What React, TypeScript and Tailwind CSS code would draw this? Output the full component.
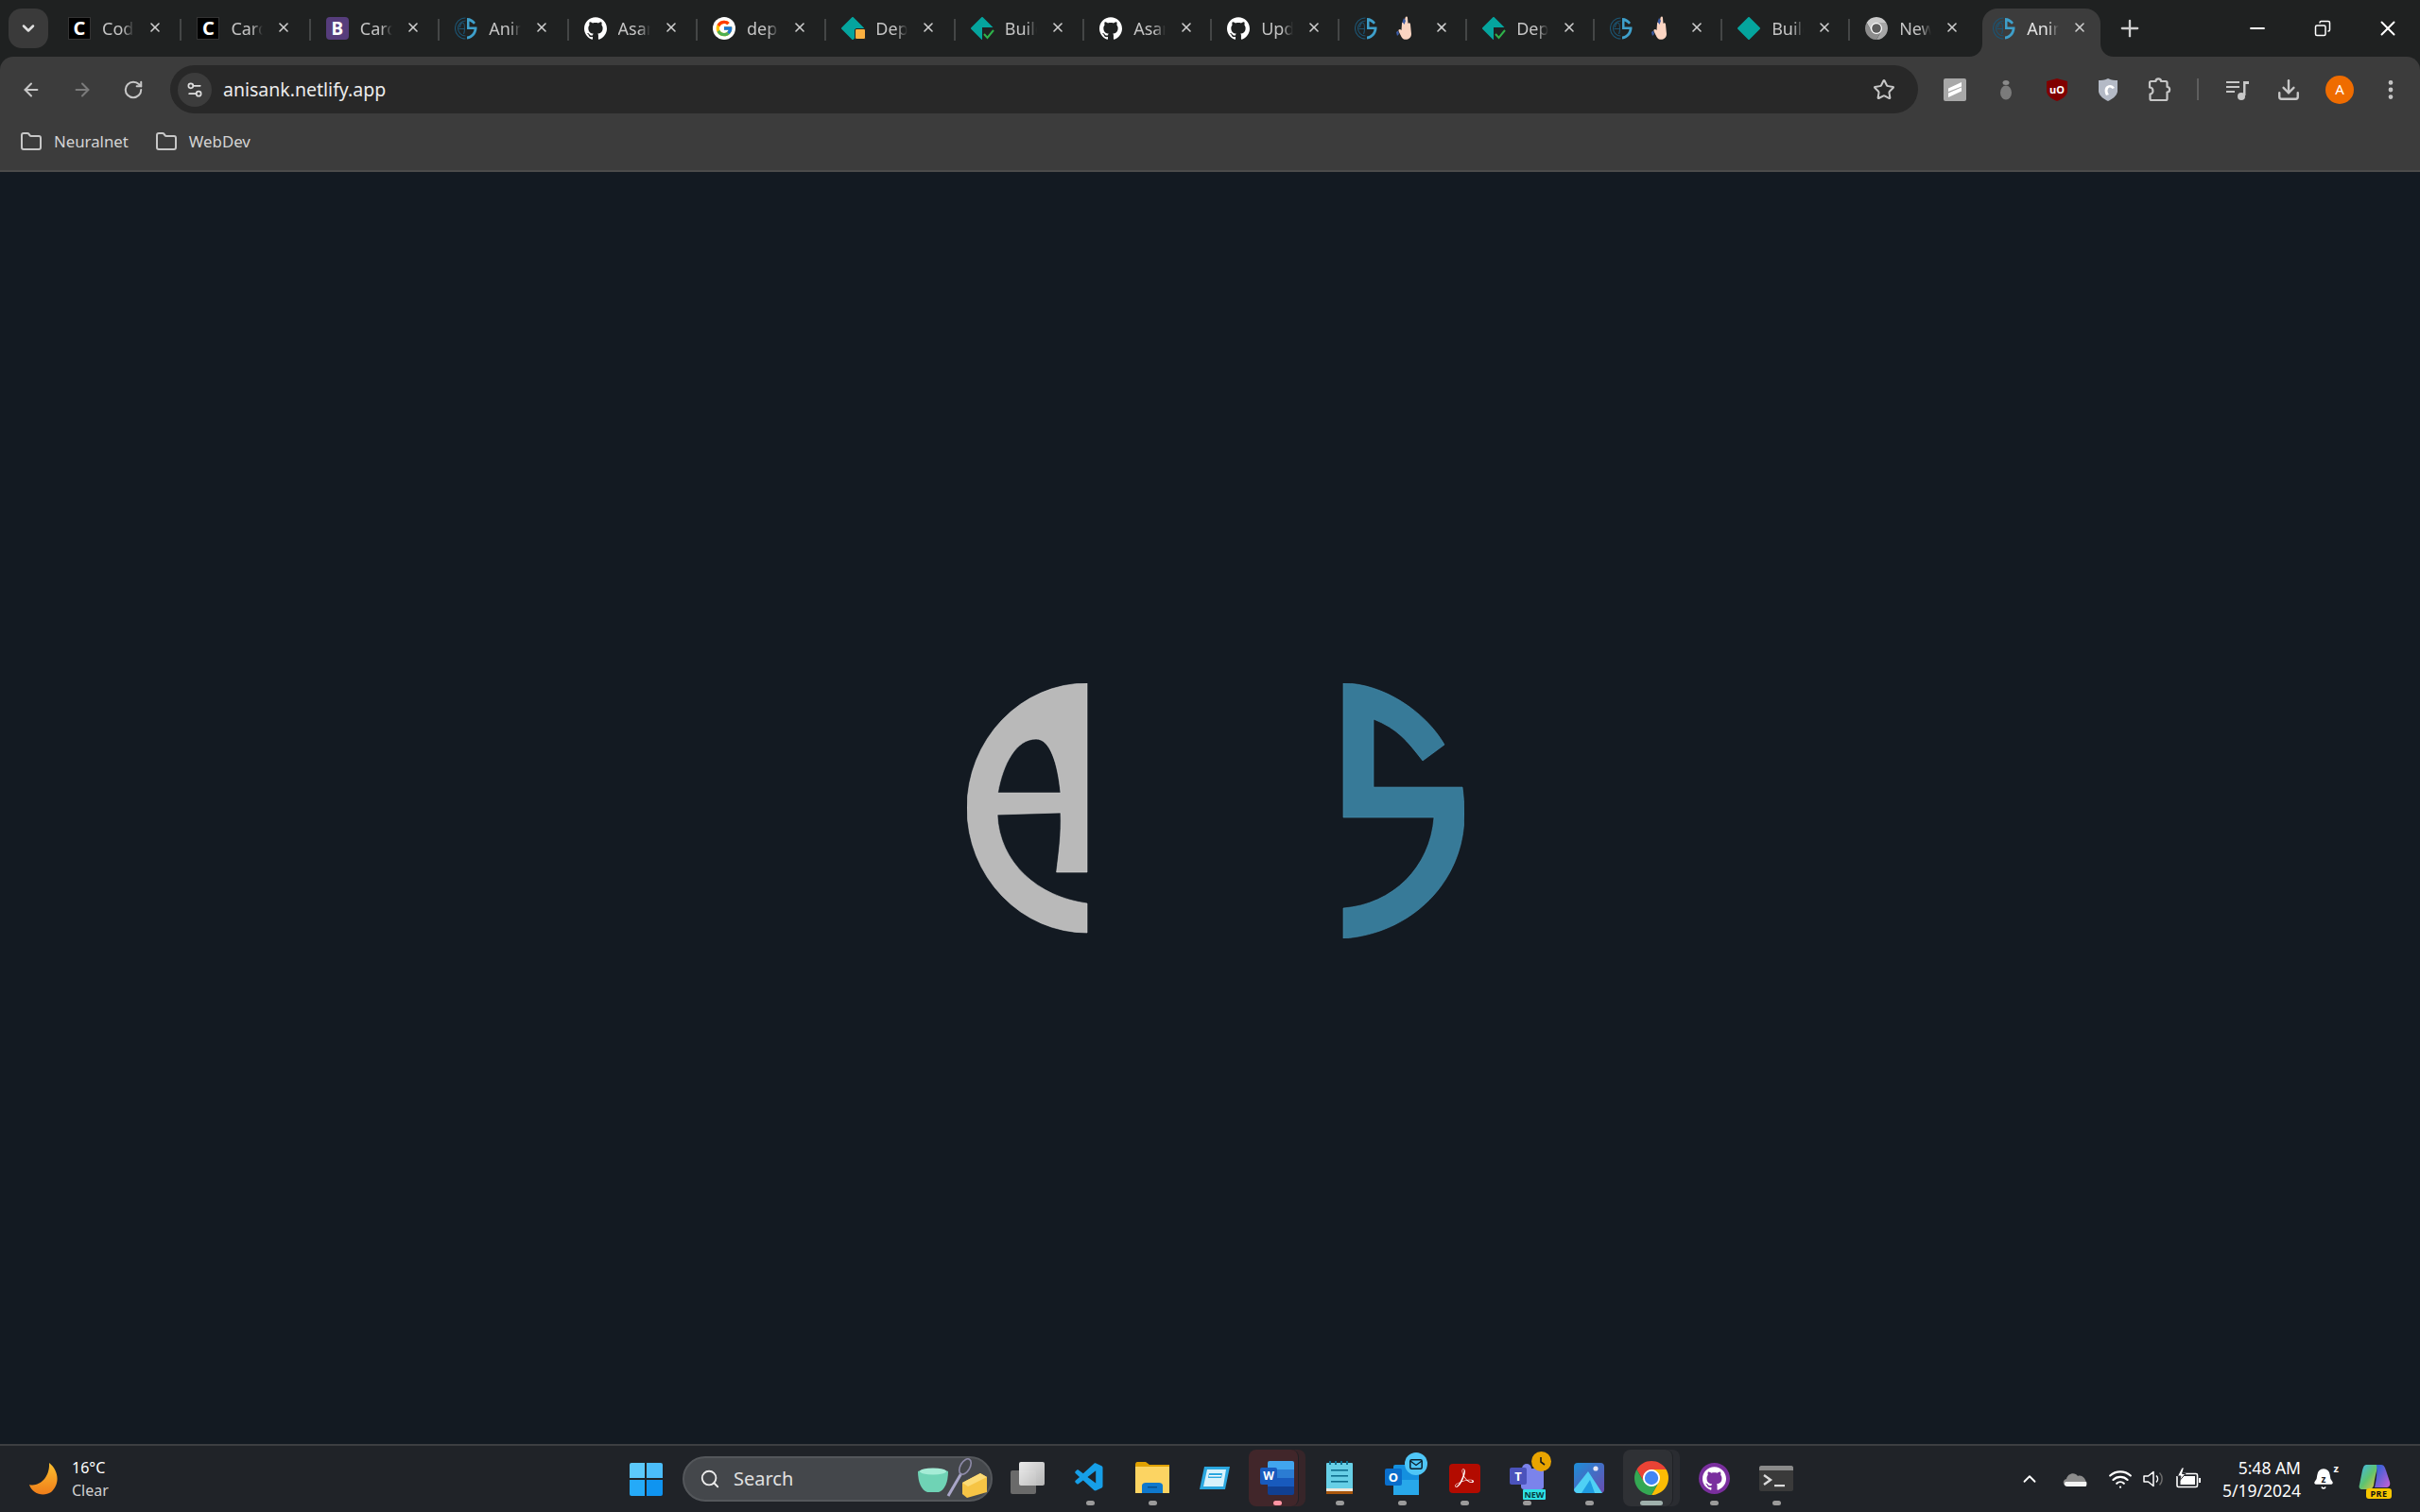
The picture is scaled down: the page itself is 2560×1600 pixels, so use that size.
// Chrome window with the anisank splash page, on a Windows 11 desktop
import React from "react";
import {
  ArrowLeft, ArrowRight, Bell, ChevronDown, ChevronUp, Copy, Download,
  EllipsisVertical, Folder, Minus, Plus, RotateCw, Search, Settings2,
  Star, Wifi, X,
} from "lucide-react";
import { FcGoogle } from "react-icons/fc";
import { SiAdobeacrobatreader, SiGithub } from "react-icons/si";
import { VscVscode } from "react-icons/vsc";

const uiFont = "font-['Noto_Sans',sans-serif]";

//Small version of the site logo, used as favicon
const AsIcon = () => (
  <svg viewBox="0 0 24 24" className="w-6 h-6">
    <path d="M11.5 1A11 11 0 0 0 11.5 23M11.5 4A8 8 0 0 0 11.5 20" fill="none" stroke="#1c5472" strokeWidth="1.1" />
    <path d="M4.5 12.5H10M5.5 11C6 8 7.5 6 8.5 6C10 6 10.5 9 10.5 12.5C10.5 15 10 17 9.5 18" fill="none" stroke="#1c5472" strokeWidth="1.1" />
    <path d="M13 1C17 1 20 3 22 6L20 7.8C18.5 6 17 5 15.5 4.5V10.5H23.5C24 16 20 23 13 23.5V20.5C17 20 20 17 20.5 13H13Z" fill="#3e9fca" />
  </svg>
);

const NetlifyIcon = ({ badge }: { badge?: "wait" | "ok" }) => (
  <div className="relative w-6 h-6">
    <svg viewBox="0 0 24 24" className="w-6 h-6">
      <path d="M12 1L23 12L12 23L1 12Z" fill="#05a59e" stroke="#05a59e" strokeWidth="2" strokeLinejoin="round" />
    </svg>
    {badge === "wait" && <div className="absolute right-[-2px] bottom-0 w-3 h-3 rounded-[2px] bg-[#fbb040] border border-[#1f2121]" />}
    {badge === "ok" && (
      <svg viewBox="0 0 14 14" className="absolute right-[-2px] bottom-[-1px] w-[14px] h-[14px]">
        <path d="M0 0H14V14H0Z" fill="#1f2121" />
        <path d="M2 7L5.5 11L12 3" fill="none" stroke="#2fb34a" strokeWidth="2" />
      </svg>
    )}
  </div>
);

const HandIcon = () => (
  <svg viewBox="0 0 20 28" className="w-5 h-7">
    <path d="M7 9C7 7 9 7 9.5 9L10.5 3C11 1 13 1 13 3L13.5 9C14 8 16 8 16 10L17 20C17 26 9 28 6.5 23L3.5 17C3 15 5 14 6.5 16Z" fill="#fbd5c2" />
    <path d="M9 3L11 6L9.5 10L7.5 7Z" fill="#3b5ba5" />
    <path d="M1 18L3 16.5L4 20L2 22Z" fill="#3b5ba5" />
  </svg>
);

//Chrome logo, takes the three sector colours so that it works for the gray favicon as well
const ChromeLogo = ({ className, red, yellow, green, blue }: { className: string; red: string; yellow: string; green: string; blue: string }) => (
  <svg viewBox="4 4 40 40" className={className}>
    <circle cx="24" cy="24" r="11" fill="#ffffff" />
    <path d="M24 14H41.32A20 20 0 0 0 6.68 14L15.34 29A10 10 0 0 1 24 14Z" fill={red} />
    <path d="M32.66 29L24 44A20 20 0 0 0 41.32 14H24A10 10 0 0 1 32.66 29Z" fill={yellow} />
    <path d="M15.34 29L6.68 14A20 20 0 0 0 24 44L32.66 29A10 10 0 0 1 15.34 29Z" fill={green} />
    <circle cx="24" cy="24" r="8" fill={blue} />
  </svg>
);

const CIcon = () => (
  <div className="w-6 h-6 bg-black border border-[#333] flex items-center justify-center text-white text-[20px] font-bold leading-none">C</div>
);
const BIcon = () => (
  <div className="w-6 h-6 bg-[#563d7c] rounded-[4px] flex items-center justify-center text-white text-[19px] font-bold leading-none">B</div>
);
const GithubTabIcon = () => <SiGithub className="w-6 h-6 text-white" />;
const GoogleIcon = () => (
  <div className="w-6 h-6 bg-white rounded-full flex items-center justify-center"><FcGoogle className="w-5 h-5" /></div>
);

type TabItem = { icon: React.ReactNode; title: string; width: string; noSep?: boolean; active?: boolean };

const tabs: TabItem[] = [
  { icon: <CIcon />, title: "Code", width: "w-[136.4px]" },
  { icon: <CIcon />, title: "Cards", width: "w-[136.4px]" },
  { icon: <BIcon />, title: "Cards", width: "w-[136.4px]" },
  { icon: <AsIcon />, title: "Anim", width: "w-[136.4px]" },
  { icon: <GithubTabIcon />, title: "Asan", width: "w-[136.4px]" },
  { icon: <GoogleIcon />, title: "depl", width: "w-[136.4px]" },
  { icon: <NetlifyIcon badge="wait" />, title: "Depl", width: "w-[136.4px]" },
  { icon: <NetlifyIcon badge="ok" />, title: "Build", width: "w-[136.4px]" },
  { icon: <GithubTabIcon />, title: "Asan", width: "w-[135px]" },
  { icon: <GithubTabIcon />, title: "Upda", width: "w-[135px]" },
  { icon: <AsIcon />, title: "", width: "w-[135px]" },
  { icon: <NetlifyIcon badge="ok" />, title: "Depl", width: "w-[135px]" },
  { icon: <AsIcon />, title: "", width: "w-[135px]" },
  { icon: <NetlifyIcon />, title: "Build", width: "w-[135px]" },
  { icon: <ChromeLogo className="w-6 h-6" red="#c9c9c9" yellow="#a6a6a6" green="#8c8c8c" blue="#5c5c5c" />, title: "New T", width: "w-[135px]", noSep: true },
  { icon: <AsIcon />, title: "Anim", width: "w-[135px]", noSep: true, active: true },
];

const Tab = ({ tab }: { tab: TabItem }) => (
  <div className={`relative shrink-0 h-[60px] flex items-center pl-4 ${tab.width}`}>
    {/* Active tab shape with the two flared bottom corners */}
    {tab.active && (
      <>
        <div className="absolute left-[5px] right-[5px] top-[9px] bottom-0 bg-[#3c3c3c] rounded-t-[16px]" />
        <svg viewBox="0 0 14 14" className="absolute left-[-9px] bottom-0 w-[14px] h-[14px]"><path d="M14 0V14H0C8 14 14 8 14 0Z" fill="#3c3c3c" /></svg>
        <svg viewBox="0 0 14 14" className="absolute right-[-9px] bottom-0 w-[14px] h-[14px]"><path d="M0 0V14H14C6 14 0 8 0 0Z" fill="#3c3c3c" /></svg>
      </>
    )}
    <div className="relative w-6 h-6 shrink-0">{tab.icon}</div>
    <div className={`relative ml-3 w-[34px] h-7 shrink-0 flex items-center ${tab.title ? "overflow-hidden [mask-image:linear-gradient(to_right,black_65%,transparent)]" : "justify-center"}`}>
      {tab.title ? (
        <span className={`block whitespace-nowrap text-[18px] leading-6 ${tab.active ? "text-[#e3e3e3]" : "text-[#c4c4c4]"}`}>{tab.title}</span>
      ) : (
        <HandIcon />
      )}
    </div>
    <X className="relative ml-[14px] mt-[-2px] w-4 h-4 shrink-0 text-[#cfcfcf]" strokeWidth={2.4} />
    {!tab.noSep && <div className="ml-auto w-[2px] h-[23px] mt-[2px] bg-[#444646]" />}
  </div>
);

const ToolSlot = ({ children }: { children: React.ReactNode }) => (
  <div className="w-[54px] h-full shrink-0 flex items-center justify-center">{children}</div>
);

//Extension and toolbar icons
const SliceExt = () => (
  <svg viewBox="0 0 24 24" className="w-6 h-6">
    <rect width="24" height="24" rx="2" fill="#a8a8a8" />
    <path d="M5 10.5L19 4V8.5L5 14ZM5 15.5L19 9.5V13.5L5 20Z" fill="#ffffff" />
  </svg>
);
const BugExt = () => (
  <svg viewBox="0 0 24 24" className="w-6 h-6">
    <ellipse cx="12" cy="15" rx="6" ry="7.5" fill="#7b7b7b" />
    <ellipse cx="12" cy="4.5" rx="3.5" ry="2.5" fill="#8a8a8a" />
  </svg>
);
const UboExt = () => (
  <div className="relative w-6 h-6 flex items-center justify-center">
    <svg viewBox="0 0 24 24" className="absolute inset-0 w-6 h-6"><path d="M12 0L23 3V14C22 19 17 22 12 24C7 22 2 19 1 14V3Z" fill="#800000" /></svg>
    <span className="relative text-white text-[11px] font-bold leading-none">uO</span>
  </div>
);
const ShieldExt = () => (
  <svg viewBox="0 0 24 24" className="w-6 h-6">
    <path d="M12 0C16 2 19 2 22 2V14C21 19 16 22 12 24C8 22 3 19 2 14V2C5 2 8 2 12 0Z" fill="#b4bac6" />
    <path d="M10 18C8 14 8 10 11 8C14 6 17 7 19 10L16.5 11C15 9 13 9 12 11C11 13 11.5 15 13 17Z" fill="#ffffff" />
  </svg>
);
const PuzzleIcon = () => (
  <svg viewBox="0 0 26 26" className="w-[26px] h-[26px]">
    <path d="M3 5.5C3 4.5 3.5 4 4.5 4H9.5C9.5 0.5 15 0.5 15 4H20C21 4 21.5 4.5 21.5 5.5V10C25 10 25 15.5 21.5 15.5V22.5C21.5 23.5 21 24 20 24H5C4 24 3.5 23.5 3.5 22.5V17.5C7.5 17.5 7.5 10.5 3 10.5Z" fill="none" stroke="currentColor" strokeWidth="2.2" strokeLinejoin="round" />
  </svg>
);
const MediaIcon = () => (
  <svg viewBox="0 0 26 26" className="w-[26px] h-[26px]">
    <path d="M1 4H15V6H1ZM1 9H15V11H1ZM1 14H10V16H1Z" fill="currentColor" />
    <path d="M19 4H25V7H21.5V19H19Z" fill="currentColor" />
    <circle cx="17" cy="20" r="4" fill="currentColor" />
  </svg>
);

//Logo drawn on the page: the half "a" in gray and the half "S" in blue
const SiteLogo = () => (
  <svg viewBox="0 0 526 270" className="w-[526px] h-[270px]">
    <path
      fillRule="evenodd"
      d="M127 0A127 132 0 0 0 127 264V233C75 226 34 190 32 139L99 137C100 160 97 180 94.6 200H127ZM32.5 116C38 85 52 59 73 59C88 59 96 85 99 116Z"
      fill="#b9b9b9"
      stroke="#d6d6d6"
      strokeWidth="0.6"
    />
    <path
      d="M398 0C440 0 485 30 505 65L482 82C465 60 455 48 430 38V110H524C525 118 526 128 526 139C526 210 470 265 398 270V238C450 234 490 195 494 142H398Z"
      fill="#377a98"
      stroke="#4a93b5"
      strokeWidth="0.6"
    />
  </svg>
);

//Taskbar icons
const TaskViewIcon = () => (
  <div className="relative w-[36px] h-[34px]">
    <div className="absolute left-0 bottom-0 w-[27px] h-[25px] rounded-[2px] bg-[#6a6a6a]" />
    <div className="absolute right-0 top-0 w-[27px] h-[25px] rounded-[2px] bg-[linear-gradient(135deg,#f4f4f4,#bdbdbd)] opacity-95" />
  </div>
);
const ExplorerIcon = () => (
  <svg viewBox="0 0 36 34" className="w-9 h-[34px]">
    <path d="M0 3C0 1 1 0 2 0H11L15 3H36V33H0Z" fill="#e0a100" />
    <path d="M0 5H36V33H0Z" fill="#fcd462" />
    <path d="M7 33V25C7 23 9 22 11 22H25C27 22 29 23 29 25V33Z" fill="#0f78cc" />
    <rect x="13" y="26" width="10" height="1.5" fill="#084f8c" />
  </svg>
);
const WindowAppIcon = () => (
  <svg viewBox="0 0 34 26" className="w-[34px] h-[26px]">
    <path d="M6 1H33L28 25H1Z" fill="#2aa7df" />
    <path d="M9 4H29L26 22H5Z" fill="#d8f2fb" />
    <path d="M11 8H25L24 13H10Z" fill="#2aa7df" />
    <path d="M11 10H24L23.5 11.5H11Z" fill="#ffffff" />
  </svg>
);
const WordIcon = () => (
  <div className="relative w-9 h-9">
    <div className="absolute right-0 top-0 w-7 h-9 rounded-[2px] overflow-hidden flex flex-col">
      <div className="flex-1 bg-[#41a5ee]" />
      <div className="flex-1 bg-[#2b7cd3]" />
      <div className="flex-1 bg-[#185abd]" />
      <div className="flex-1 bg-[#103f91]" />
    </div>
    <div className="absolute left-0 top-[7px] w-[18px] h-[18px] rounded-[2px] bg-[#185abd] flex items-center justify-center text-white text-[12px] font-bold leading-none">W</div>
  </div>
);
const NotepadIcon = () => (
  <svg viewBox="0 0 28 36" className="w-7 h-9">
    <rect x="0" y="2" width="28" height="30" rx="1" fill="#67cfe6" />
    <rect x="0" y="29" width="28" height="3" fill="#efe8dc" />
    <rect x="0" y="32" width="28" height="3" fill="#a8560c" />
    <rect x="5" y="9" width="18" height="1.6" fill="#0e6f8f" />
    <rect x="5" y="15" width="18" height="1.6" fill="#0e6f8f" />
    <rect x="5" y="21" width="18" height="1.6" fill="#0e6f8f" />
    <path d="M3 0h2v4h-2zM9 0h2v4h-2zM15 0h2v4h-2zM21 0h2v4h-2z" fill="#0e6f8f" />
  </svg>
);
const OutlookIcon = () => (
  <div className="relative w-[36px] h-[36px]">
    <div className="absolute right-0 bottom-0 w-[27px] h-[32px] rounded-[2px] bg-[#1490df]" />
    <div className="absolute right-0 bottom-0 w-[27px] h-[16px] bg-[#28a8ea]" />
    <div className="absolute left-0 top-[8px] w-[18px] h-[18px] rounded-[2px] bg-[#0a6ecb] flex items-center justify-center text-white text-[13px] font-bold leading-none">O</div>
    {/* unread mail badge */}
    <div className="absolute right-[-9px] top-[-9px] w-6 h-6 rounded-full bg-[#4fc6f7] flex items-center justify-center">
      <svg viewBox="0 0 14 11" className="w-[14px] h-[11px]">
        <rect x="0.8" y="0.8" width="12.4" height="9.4" rx="1.5" fill="none" stroke="#0b1d2a" strokeWidth="1.5" />
        <path d="M1 2L7 6.5L13 2" fill="none" stroke="#0b1d2a" strokeWidth="1.3" />
      </svg>
    </div>
  </div>
);
const AcrobatIcon = () => (
  <div className="w-[33px] h-[31px] rounded-[4px] bg-[#b30b00] flex items-center justify-center">
    <SiAdobeacrobatreader className="w-5 h-5 text-white" />
  </div>
);
const TeamsIcon = () => (
  <div className="relative w-[36px] h-[36px]">
    <div className="absolute right-0 top-[8px] w-[24px] h-[22px] rounded-[3px] bg-[#7b83eb]" />
    <div className="absolute left-[13px] top-[3px] w-[10px] h-[10px] rounded-full bg-[#7b83eb]" />
    <div className="absolute left-0 top-[7px] w-[18px] h-[18px] rounded-[2px] bg-[#4b53bc] flex items-center justify-center text-white text-[13px] font-bold leading-none">T</div>
    {/* clock badge */}
    <div className="absolute right-[-8px] top-[-10px] w-[21px] h-[21px] rounded-full bg-[#e9a400] flex items-center justify-center">
      <svg viewBox="0 0 12 12" className="w-3 h-3"><path d="M5 1V6L9 9" fill="none" stroke="#1a1a1a" strokeWidth="1.6" /></svg>
    </div>
    <div className="absolute right-[-2px] bottom-[-5px] w-[24px] h-[11px] rounded-[1px] bg-[#2ee0e4] flex items-center justify-center text-[#073b3d] text-[9px] font-bold leading-none">NEW</div>
  </div>
);
const PhotosIcon = () => (
  <svg viewBox="0 0 32 32" className="w-8 h-8">
    <defs>
      <linearGradient id="photosBg" x1="0" y1="0" x2="1" y2="1">
        <stop offset="0" stopColor="#1d8fd8" />
        <stop offset="1" stopColor="#6a4bb0" />
      </linearGradient>
    </defs>
    <rect width="32" height="32" rx="4" fill="url(#photosBg)" />
    <circle cx="23" cy="6" r="2.6" fill="#e8e8f5" />
    <path d="M0 28L15 9L30 32H4C2 32 0 30 0 28Z" fill="#4fd0f5" />
    <path d="M8 32L17 18L22 32Z" fill="#1f9be0" />
  </svg>
);
const GithubDesktopIcon = () => (
  <div className="w-[33px] h-[33px] rounded-full bg-[#7a2f9e] flex items-center justify-center">
    <SiGithub className="w-[25px] h-[25px] text-white" />
  </div>
);
const TerminalIcon = () => (
  <svg viewBox="0 0 36 27" className="w-9 h-[27px]">
    <rect width="36" height="27" rx="2" fill="#3a3a3a" />
    <path d="M0 2C0 1 1 0 2 0H34C35 0 36 1 36 2V5H0Z" fill="#8a8a8a" />
    <path d="M5 10L12 15L5 20" fill="none" stroke="#dcdcdc" strokeWidth="2.4" />
    <rect x="16" y="20" width="11" height="2.2" fill="#dcdcdc" />
  </svg>
);

type TaskItem = { icon: React.ReactNode; indicator?: "dot" | "pink" | "wide"; tile?: string };

const taskItems: TaskItem[] = [
  { icon: <TaskViewIcon /> },
  { icon: <VscVscode className="w-9 h-9 text-[#169fe8]" />, indicator: "dot" },
  { icon: <ExplorerIcon />, indicator: "dot" },
  { icon: <WindowAppIcon /> },
  { icon: <WordIcon />, indicator: "pink", tile: "bg-[#41262a]" },
  { icon: <NotepadIcon />, indicator: "dot" },
  { icon: <OutlookIcon />, indicator: "dot" },
  { icon: <AcrobatIcon />, indicator: "dot" },
  { icon: <TeamsIcon />, indicator: "dot" },
  { icon: <PhotosIcon />, indicator: "dot" },
  { icon: <ChromeLogo className="w-9 h-9" red="#ea4335" yellow="#fbbc04" green="#34a853" blue="#4285f4" />, indicator: "wide", tile: "bg-[#2f3135]" },
  { icon: <GithubDesktopIcon />, indicator: "dot" },
  { icon: <TerminalIcon />, indicator: "dot" },
];

const TaskSlot = ({ item }: { item: TaskItem }) => (
  <div className="relative w-[66px] h-full shrink-0 flex items-center justify-center">
    {/* Running window highlight, second layer peeks out at the right */}
    {item.tile && (
      <>
        <div className={`absolute left-[8px] top-[4px] bottom-[6px] w-[55px] rounded-[8px] opacity-70 ${item.tile}`} />
        <div className={`absolute left-[3px] top-[4px] bottom-[6px] w-[53px] rounded-[8px] border-r border-[#1f2125] ${item.tile}`} />
      </>
    )}
    <div className="relative mb-[2px]">{item.icon}</div>
    {item.indicator === "dot" && <div className="absolute bottom-[7px] w-[9px] h-[5px] rounded-full bg-[#9b9b9b]" />}
    {item.indicator === "pink" && <div className="absolute bottom-[7px] w-[9px] h-[5px] rounded-full bg-[#ff94a3]" />}
    {item.indicator === "wide" && <div className="absolute bottom-[7px] w-6 h-[5px] rounded-full bg-[#9fb0ac]" />}
  </div>
);

const App = () => {
  return (
    <div className={`w-screen h-screen overflow-hidden flex flex-col bg-[#131a22] ${uiFont}`}>
      {/* Tab strip */}
      <div className="h-[60px] shrink-0 flex items-center bg-[#1f2121]">
        <div className="ml-[9px] w-[42px] h-[42px] rounded-[14px] bg-[#3a3a3a] flex items-center justify-center">
          <ChevronDown className="w-5 h-5 text-[#e0e0e0]" strokeWidth={3} />
        </div>
        <div className="ml-[5px] flex">
          {tabs.map((tab, index) => (
            <Tab key={index} tab={tab} />
          ))}
        </div>
        <Plus className="ml-[12px] w-7 h-7 text-[#cfcfcf]" strokeWidth={2} />
        {/* Window controls */}
        <div className="ml-auto flex h-full text-white">
          <div className="w-[69px] flex items-center justify-center"><Minus className="w-6 h-6" strokeWidth={1.8} /></div>
          <div className="w-[69px] flex items-center justify-center"><Copy className="w-[18px] h-[18px] -scale-x-100" strokeWidth={2} /></div>
          <div className="w-[69px] flex items-center justify-center"><X className="w-[26px] h-[26px]" strokeWidth={1.8} /></div>
        </div>
      </div>

      {/* Toolbar and bookmarks bar */}
      <div className="bg-[#1f2121] shrink-0">
        <div className="bg-[#3c3c3c] rounded-t-[14px] border-b-2 border-[#4b4b4b] h-[122px] flex flex-col">
          <div className="h-[60px] pt-[9px] flex">
            <div className="pl-[6px] flex h-full text-[#c7c7c7]">
              <ToolSlot><ArrowLeft className="w-[22px] h-[22px]" strokeWidth={2.2} /></ToolSlot>
              <ToolSlot><ArrowRight className="w-[22px] h-[22px] text-[#7b7b7b]" strokeWidth={2.2} /></ToolSlot>
              <ToolSlot><RotateCw className="w-[22px] h-[22px]" strokeWidth={2.2} /></ToolSlot>
            </div>
            <div className="ml-3 flex-1 h-full rounded-full bg-[#282828] flex items-center pl-2 pr-6">
              <div className="w-9 h-9 rounded-full bg-[#3c3c3c] flex items-center justify-center">
                <Settings2 className="w-5 h-5 text-[#dedede]" strokeWidth={2} />
              </div>
              <span className="ml-3 text-[19.5px] leading-none text-[#ececec]">anisank.netlify.app</span>
              <Star className="ml-auto w-6 h-6 text-[#c7c7c7]" strokeWidth={2} />
            </div>
            <div className="w-[531px] pl-3 flex items-center h-full shrink-0 text-[#c7c7c7]">
              <ToolSlot><SliceExt /></ToolSlot>
              <ToolSlot><BugExt /></ToolSlot>
              <ToolSlot><UboExt /></ToolSlot>
              <ToolSlot><ShieldExt /></ToolSlot>
              <ToolSlot><PuzzleIcon /></ToolSlot>
              <div className="ml-[13px] mr-[14px] w-[2px] h-[23px] bg-[#5e5e5e]" />
              <ToolSlot><MediaIcon /></ToolSlot>
              <ToolSlot><Download className="w-[26px] h-[26px]" strokeWidth={2.2} /></ToolSlot>
              <ToolSlot>
                <div className="w-[30px] h-[30px] rounded-full bg-[#ef6c00] flex items-center justify-center text-white text-[15px] leading-none">A</div>
              </ToolSlot>
              <ToolSlot><EllipsisVertical className="w-[26px] h-[26px]" strokeWidth={2.4} /></ToolSlot>
            </div>
          </div>
          <div className="h-[60px] pl-[21px] flex items-center text-[16.8px] text-[#d4d4d4]">
            <Folder className="w-6 h-6 text-[#c7c7c7]" strokeWidth={2} />
            <span className="ml-3">Neuralnet</span>
            <Folder className="ml-[28px] w-6 h-6 text-[#c7c7c7]" strokeWidth={2} />
            <span className="ml-3">WebDev</span>
          </div>
        </div>
      </div>

      {/* Page content */}
      <div className="flex-1 min-h-0 flex items-center justify-center pl-3 pt-[6px]">
        <SiteLogo />
      </div>

      {/* Windows taskbar */}
      <div className="h-[72px] shrink-0 flex bg-[#202328] border-t-2 border-[#3c3e41]">
        <div className="w-[650px] shrink-0 pl-[30px] flex items-center">
          <svg viewBox="0 0 34 34" className="w-[34px] h-[34px]">
            <defs>
              <linearGradient id="moonFill" x1="0" y1="0" x2="0" y2="1">
                <stop offset="0" stopColor="#fdc02f" />
                <stop offset="1" stopColor="#ef7d1a" />
              </linearGradient>
            </defs>
            <path d="M22 0C32 8 34 22 24 31C16 36 4 33 1 23C11 26 23 16 22 0Z" fill="url(#moonFill)" />
          </svg>
          <div className="ml-3 flex flex-col text-[16px] leading-6">
            <span className="text-white">16°C</span>
            <span className="text-[#d0d0d0]">Clear</span>
          </div>
        </div>
        <div className="w-[66px] shrink-0 flex items-center justify-center">
          <div className="w-[35px] h-[35px] grid grid-cols-2 gap-[2px]">
            <div className="rounded-tl-[2px] bg-[#5cc9fb]" />
            <div className="rounded-tr-[2px] bg-[#4bbdfa]" />
            <div className="rounded-bl-[2px] bg-[#25aaf8]" />
            <div className="rounded-br-[2px] bg-[#0f94f0]" />
          </div>
        </div>
        <div className="ml-[6px] w-[328px] shrink-0 h-12 self-center rounded-full bg-[#44474b] border-2 border-[#54575b] flex items-center pl-4">
          <Search className="w-[22px] h-[22px] text-[#ececec]" strokeWidth={2} />
          <span className="ml-[14px] text-[20px] leading-none text-[#e0e0e0]">Search</span>
          {/* Bowl, whisk and butter illustration */}
          <svg viewBox="0 0 74 44" className="ml-auto mr-[3px] w-[74px] h-[44px]">
            <path d="M0 14C8 10 24 10 32 14C32 26 28 34 22 36H10C4 34 0 26 0 14Z" fill="#6fd3b5" />
            <ellipse cx="16" cy="14" rx="14" ry="3.5" fill="#a5ecd6" />
            <path d="M32 40L46 16" stroke="#a9a6c8" strokeWidth="3" />
            <ellipse cx="50" cy="9" rx="5" ry="9" fill="none" stroke="#8d8aa8" strokeWidth="1.6" transform="rotate(30 50 9)" />
            <path d="M47 26L66 16L73 20V36L52 42L47 38Z" fill="#f6c445" />
            <path d="M47 26L66 16L73 20L53 30Z" fill="#fcdb77" />
          </svg>
        </div>
        <div className="ml-1 flex h-full">
          {taskItems.map((item, index) => (
            <TaskSlot key={index} item={item} />
          ))}
        </div>
        {/* System tray */}
        <div className="flex-1 flex items-center text-white">
          <ChevronUp className="ml-[224px] w-[22px] h-[22px]" strokeWidth={2} />
          <svg viewBox="0 0 26 16" className="ml-[24px] w-[26px] h-4">
            <path d="M5 16C0 16 -1 9 4 8C5 2 13 0 16 5C21 3 26 9 25 16Z" fill="#8c8c8c" />
            <path d="M5 16C2 16 1 13 3 11L25 11C26 13 25 16 24 16Z" fill="#f4f4f4" />
          </svg>
          <Wifi className="ml-[22px] w-[26px] h-[26px]" strokeWidth={2} />
          <svg viewBox="0 0 24 24" className="ml-[10px] w-6 h-6">
            <path d="M2 9H6.5L12 4.5V19.5L6.5 15H2Z" fill="none" stroke="#ffffff" strokeWidth="1.5" strokeLinejoin="round" />
            <path d="M15 8.5C17 10.5 17 13.5 15 15.5" fill="none" stroke="#ffffff" strokeWidth="1.5" />
            <path d="M18.5 5.5C22 9 22 15 18.5 18.5" fill="none" stroke="#6a6a6a" strokeWidth="1.5" />
          </svg>
          <svg viewBox="0 0 26 24" className="ml-[12px] w-[26px] h-6">
            <path d="M4 6.5H21C22 6.5 22.5 7 22.5 8V19C22.5 20 22 20.5 21 20.5H2.5C1.5 20.5 1 20 1 19V9" fill="none" stroke="#ffffff" strokeWidth="1.6" />
            <path d="M4.5 9H20V18H4.5Z" fill="#ffffff" />
            <path d="M24 11H26V16H24Z" fill="#ffffff" />
            <path d="M6 0L1.5 9H5L3.5 14L10 6.5H6.5L8.5 0Z" fill="#ffffff" stroke="#202328" strokeWidth="1" />
          </svg>
          <div className="w-[106px] flex flex-col items-end text-[17.5px] leading-6 text-white">
            <span>5:48 AM</span>
            <span>5/19/2024</span>
          </div>
          <div className="relative ml-3 w-6 h-6 flex items-center justify-center">
            <Bell className="w-[24px] h-[24px] fill-white" strokeWidth={1.5} />
            <span className="absolute inset-0 flex items-center justify-center text-[#202328] text-[10px] font-bold leading-none">z</span>
            <span className="absolute right-[-4px] top-[-5px] text-[11px] font-bold leading-none">z</span>
          </div>
          <div className="relative ml-[25px] w-[34px] h-[34px]">
            <svg viewBox="0 0 34 30" className="w-[34px] h-[30px]">
              <defs>
                <linearGradient id="copilotFill" x1="0" y1="0" x2="1" y2="1">
                  <stop offset="0" stopColor="#3fb6f0" />
                  <stop offset="0.5" stopColor="#5fc36f" />
                  <stop offset="1" stopColor="#f3c53c" />
                </linearGradient>
                <linearGradient id="copilotRight" x1="0" y1="0" x2="1" y2="1">
                  <stop offset="0" stopColor="#1b63d8" />
                  <stop offset="1" stopColor="#c85fd6" />
                </linearGradient>
              </defs>
              <path d="M8 2H21C19 8 17 16 16 24C15 27 13 28 10 28H4C1 28 0 26 1 23L4 8C5 4 6 2 8 2Z" fill="url(#copilotFill)" />
              <path d="M19 2H24C27 2 28 5 29 8L33 20C34 24 32 26 29 26H17C19 18 20 8 19 2Z" fill="url(#copilotRight)" />
            </svg>
            <div className="absolute left-[8px] bottom-[-4px] w-[27px] h-[11px] rounded-[3px] bg-[#f7c600] flex items-center justify-center text-[#111] text-[9px] font-bold leading-none tracking-[0.5px]">PRE</div>
          </div>
        </div>
      </div>
    </div>
  );
};

export default App;
